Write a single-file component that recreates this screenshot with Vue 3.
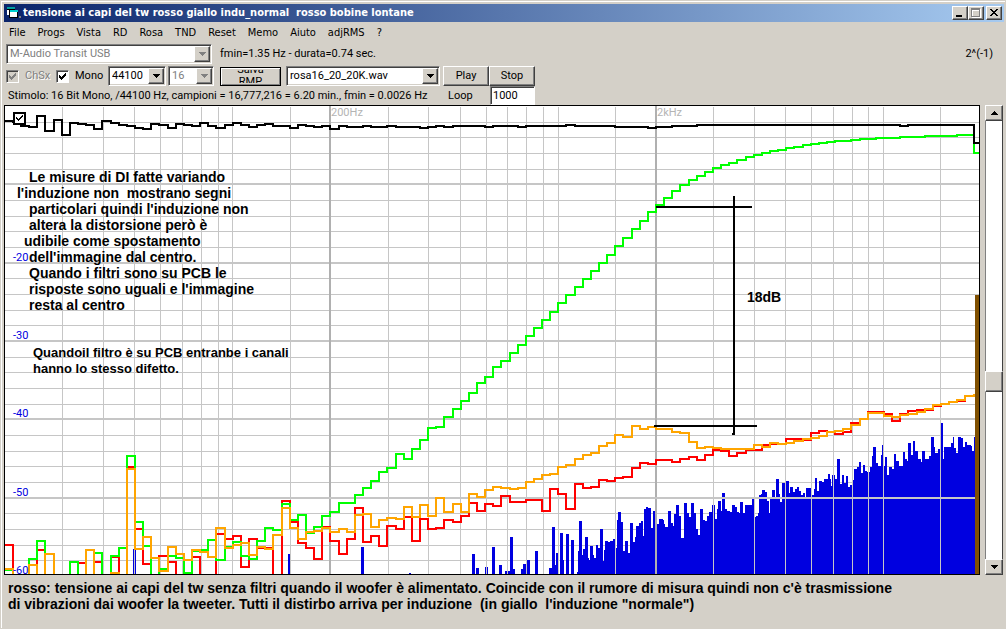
<script setup>
import { ref } from 'vue'

const menu = ['File', 'Progs', 'Vista', 'RD', 'Rosa', 'TND', 'Reset', 'Memo', 'Aiuto', 'adjRMS', '?']

const device = ref('M-Audio Transit USB')
const rate = ref('44100')
const bits = ref('16')
const wave = ref('rosa16_20_20K.wav')
const loops = ref('1000')
const left = ref(true)
const mono = ref(true)
const showTrace = ref(true)
const scrollPos = 57

// Drawing area of the graph, in graph units
const plot = { x: 5, y: 106, w: 974, h: 468 }
const bottom = plot.y + plot.h
const viewBox = `${plot.x} ${plot.y} ${plot.w} ${plot.h}`

const rows = [122, 137, 153, 169, 200, 216, 231, 247, 278, 294, 310, 325, 357, 372, 388, 404, 435, 451, 466, 482, 513, 529, 545, 560]
const majorRows = [184, 263, 341, 419]
const columns = [62, 103, 134, 160, 182, 201, 218, 232, 290, 388, 428, 460, 486, 507, 526, 543, 558, 615, 713, 754, 785, 811, 833, 852, 868, 883, 940]
const majorColumns = [330, 656]

// One level per band; OFF is below the visible range
const OFF = 590
const input = [
  121, 122, 126, 127, 116, 131, 120, 135, 123, 124, 125, 129, 121, 123, 125, 126, 128, 129, 124, 125,
  128, 124, 125, 126, 123, 126, 128, 125, 123, 125, 127, 125, 124, 126, 126, 128, 125, 126, 127, 126,
  129, 126, 127, 127, 126, 127, 127, 126, 127, 127, 127, 128, 127, 126, 127, 126, 126, 126, 126, 127,
  126, 126, 126, 127, 126, 126, 126, 126, 126, 125, 126, 126, 126, 126, 126, 127, 127, 127, 127, 128,
  127, 127, 126, 126, 126, 125, 125, 125, 125, 125, 125, 125, 125, 125, 125, 125, 125, 125, 125, 125,
  125, 125, 125, 125, 125, 125, 125, 125, 125, 125, 126, 125, 125, 125, 125, 125, 125, 125, 125, 143
]
const green = [
  570, OFF, OFF, 559, 541, OFF, OFF, OFF, 562, OFF, OFF, 553, OFF, 556, 548, 456, 522, 546, OFF, 569,
  556, 558, 573, 551, 550, 540, 560, 547, 542, 556, 559, 541, 528, 530, 504, 520, 515, 533, 527, 516,
  512, 503, 503, 495, 488, 481, 472, 468, 454, 459, 449, 440, 428, 427, 417, 409, 401, 393, 383, 377,
  367, 361, 353, 345, 336, 328, 320, 312, 303, 295, 287, 279, 271, 263, 255, 246, 238, 229, 221, 212,
  205, 198, 191, 185, 180, 176, 172, 168, 165, 163, 160, 157, 155, 153, 151, 150, 148, 147, 145, 144,
  143, 142, 141, 141, 140, 139, 139, 138, 138, 138, 137, 137, 137, 136, 136, 136, 136, 135, 135, 153
]
const red = [
  545, OFF, OFF, OFF, 550, OFF, OFF, OFF, OFF, 563, OFF, 562, OFF, 557, OFF, 467, 529, 564, OFF, 556,
  562, OFF, OFF, 557, OFF, OFF, 534, 539, 536, 567, 539, 548, 548, OFF, 501, 522, 543, 548, 559, 527,
  541, 554, 539, 508, 542, 536, 546, 526, 529, 517, 541, 519, 529, 528, 520, 522, 516, 503, 511, 504,
  506, 496, 502, 502, 500, 500, 511, 489, 494, 509, 484, 488, 487, 480, 481, 478, 477, 468, 463, 464,
  460, 460, 462, 459, 457, 460, 455, 450, 451, 456, 453, 450, 450, 445, 444, 444, 439, 439, 440, 433,
  431, 432, 434, 432, 423, 419, 412, 412, 414, 421, 414, 411, 410, 410, 406, 404, 402, 401, 396, 396
]
const orange = [
  569, OFF, OFF, 565, OFF, 554, OFF, OFF, OFF, OFF, 550, OFF, OFF, 573, OFF, 469, 549, 537, 558, 571,
  547, 554, 560, 550, 552, 557, 528, 548, 545, 543, 555, 547, 549, 535, 508, 528, 539, 532, 531, 528,
  532, 529, 532, 515, 514, 527, 520, 518, 519, 507, 517, 505, 516, 498, 512, 504, 512, 494, 497, 490,
  487, 488, 489, 488, 482, 479, 475, 474, 467, 465, 459, 455, 453, 446, 443, 435, 437, 426, 429, 427,
  429, 429, 432, 433, 442, 448, 447, 448, 449, 449, 449, 449, 445, 447, 443, 444, 443, 441, 439, 438,
  436, 432, 431, 429, 425, 419, 413, 413, 416, 417, 415, 414, 412, 409, 405, 404, 402, 400, 396, 395
]

const bandX = (k) => Math.round(4.7 + k * 8.142)

function stairs(levels) {
  let d = `M${bandX(0)} ${levels[0]}`
  levels.forEach((y, k) => {
    d += `V${y}H${k === levels.length - 1 ? plot.x + plot.w : bandX(k + 1)}`
  })
  return d
}

const traces = [
  { name: 'red', d: stairs(red) },
  { name: 'green', d: stairs(green) },
  { name: 'orange', d: stairs(orange) },
  { name: 'black', d: stairs(input) }
]

// Isolated spectrum lines: x, width, top
const spikes = [
  [133, 1, 549], [135, 1, 549], [288, 2, 554], [361, 3, 547], [409, 2, 573], [472, 3, 554], [476, 3, 568],
  [485, 1, 567], [487, 1, 567], [492, 3, 547], [499, 3, 565], [505, 5, 571], [510, 3, 537], [513, 2, 569],
  [521, 2, 569], [523, 3, 564], [527, 3, 560], [535, 3, 551], [549, 3, 568], [552, 3, 527], [555, 1, 565],
  [556, 2, 553], [560, 3, 533], [563, 1, 560], [566, 3, 534], [571, 3, 540], [577, 1, 572]
]

// Dense part of the spectrum: bin, level, in thirds of a graph unit from (470, 410)
const bins = [
  324, 423, 328, 334, 335, 434, 340, 418, 346, 380, 353, 445, 358, 450, 361, 409, 368, 436, 373, 443, 378, 405, 385, 414,
  391, 358, 398, 453, 403, 420, 406, 394, 413, 397, 420, 392, 428, 388, 435, 414, 440, 330, 445, 305, 452, 337, 458, 422,
  466, 392, 473, 430, 479, 441, 481, 338, 488, 396, 494, 380, 499, 347, 508, 338, 514, 332, 520, 377, 523, 296, 528, 290,
  535, 294, 542, 354, 550, 302, 555, 340, 562, 342, 568, 326, 578, 330, 582, 342, 586, 350, 595, 302, 602, 340, 608, 348,
  613, 312, 619, 284, 626, 318, 633, 384, 641, 278, 650, 308, 658, 320, 664, 278, 671, 310, 677, 358, 684, 375, 690, 296,
  698, 330, 706, 332, 711, 318, 718, 306, 726, 286, 735, 328, 741, 296, 745, 272, 752, 303, 757, 248, 764, 298, 772, 302,
  780, 306, 787, 284, 794, 290, 800, 306, 808, 310, 811, 275, 818, 308, 826, 284, 838, 284, 846, 268, 852, 320, 858, 318,
  864, 310, 867, 255, 874, 252, 877, 240, 884, 246, 892, 274, 897, 310, 901, 262, 907, 240, 914, 262, 919, 206, 926, 252,
  931, 275, 937, 220, 944, 238, 949, 212, 956, 248, 961, 230, 969, 246, 975, 236, 980, 230, 986, 242, 992, 256, 998, 250,
  1005, 262, 1009, 233, 1024, 254, 1031, 236, 1034, 203, 1041, 242, 1048, 212, 1056, 216, 1062, 208, 1069, 206, 1073, 193,
  1080, 208, 1084, 228, 1087, 196, 1094, 206, 1101, 148, 1110, 222, 1115, 194, 1122, 218, 1127, 198, 1134, 230, 1141, 226,
  1147, 210, 1153, 176, 1162, 170, 1166, 157, 1173, 188, 1178, 166, 1184, 184, 1192, 186, 1199, 172, 1207, 138, 1210, 110,
  1217, 158, 1224, 168, 1232, 136, 1235, 104, 1240, 168, 1244, 142, 1250, 194, 1258, 170, 1266, 178, 1271, 131, 1277, 154,
  1286, 168, 1295, 168, 1298, 125, 1305, 146, 1312, 154, 1315, 100, 1322, 134, 1328, 92, 1334, 124, 1343, 146, 1352, 155,
  1357, 122, 1366, 146, 1376, 138, 1384, 80, 1391, 112, 1396, 130, 1404, 118, 1411, 115, 1414, 40, 1419, 146, 1423, 110,
  1434, 112, 1444, 98, 1448, 82, 1453, 114, 1458, 130, 1463, 80, 1472, 84, 1478, 110, 1484, 97, 1492, 104, 1502, 108,
  1507, 122, 1511, 80
]
let spectrum = `M578 ${bottom}`
for (let i = 0; i < bins.length; i += 2) {
  spectrum += `H${Math.round(470 + bins[i] / 3)}V${Math.round(410 + bins[i + 1] / 3)}`
}
spectrum += `H975V${bottom}Z`

// Text on the graph: left edge, vertical centre, kind
const notes = [
  [331, 113, 'freq', '200Hz'],
  [657, 113, 'freq', '2kHz'],
  [13, 258, 'level', '-20'],
  [13, 336, 'level', '-30'],
  [13, 414, 'level', '-40'],
  [13, 493, 'level', '-50'],
  [13, 571, 'level', '-60'],
  [29, 177, 'note', 'Le misure di DI fatte variando'],
  [17, 193, 'note', "l'induzione non  mostrano segni"],
  [29, 209, 'note', "particolari quindi l'induzione non"],
  [29, 225, 'note', 'altera la distorsione però è'],
  [24, 241, 'note', 'udibile come spostamento'],
  [29, 257, 'note', "dell'immagine dal centro."],
  [29, 273, 'note', 'Quando i filtri sono su PCB le'],
  [29, 289, 'note', "risposte sono uguali e l'immagine"],
  [29, 305, 'note', 'resta al centro'],
  [33, 353, 'remark', 'Quandoil filtro è su PCB entranbe i canali'],
  [33, 369, 'remark', 'hanno lo stesso difetto.'],
  [747, 297, 'note', '18dB']
]
const place = (x, y) => ({
  left: `${((x - plot.x) / plot.w) * 100}%`,
  top: `${((y - plot.y) / plot.h) * 100}%`
})
</script>

<template>
  <main class="window">
    <header class="titlebar">
      <svg class="app-icon" viewBox="0 0 14 12" width="14" height="12" shape-rendering="crispEdges">
        <path d="M0 1H8V8H0Z" fill="#fff" />
        <path d="M0 0H8V2H0Z" fill="#00a0a0" />
        <path d="M3 4H11V11H3Z" fill="#fff" />
        <path d="M3 3H11V5H3Z" fill="#00d0d0" />
        <path d="M2 3H3V11H2ZM3 10H11V11H3ZM10 5H11V10H10ZM0 2H8V3H0Z" fill="#000" />
        <path d="M12 9H14V11H12Z" fill="#808080" />
      </svg>
      <h1>tensione ai capi del tw rosso giallo indu_normal&nbsp; rosso bobine lontane</h1>
      <div class="window-buttons">
        <button type="button" aria-label="Riduci">
          <svg viewBox="0 0 12 10" width="12" height="10" shape-rendering="crispEdges"><path d="M2 7H8V9H2Z" /></svg>
        </button>
        <button type="button" aria-label="Ingrandisci" disabled>
          <svg viewBox="0 0 12 10" width="12" height="10" shape-rendering="crispEdges">
            <path d="M2 1H11V10H2ZM3 3V9H10V3Z" fill="#fff" fill-rule="evenodd" />
            <path d="M1 0H10V9H1ZM2 2V8H9V2Z" fill="#808080" fill-rule="evenodd" />
          </svg>
        </button>
        <button type="button" class="close" aria-label="Chiudi">
          <svg viewBox="0 0 12 10" width="12" height="10" shape-rendering="crispEdges">
            <path d="M2 1H4V2H5V3H7V2H8V1H10V2H9V3H8V4H7V5H8V6H9V7H10V8H8V7H7V6H5V7H4V8H2V7H3V6H4V5H5V4H4V3H3V2H2Z" />
          </svg>
        </button>
      </div>
    </header>

    <nav class="menu">
      <button v-for="item in menu" :key="item" type="button">{{ item }}</button>
    </nav>

    <section class="bar">
      <span class="combo device off">
        <select v-model="device" aria-label="Periferica" disabled><option>M-Audio Transit USB</option></select>
        <i><svg viewBox="0 0 7 4" width="7" height="4" shape-rendering="crispEdges"><path d="M0 0H7V1H6V2H5V3H4V4H3V3H2V2H1V1H0Z" /></svg></i>
      </span>
      <output>fmin=1.35 Hz - durata=0.74 sec.</output>
      <output class="power">2^(-1)</output>
    </section>

    <section class="bar">
      <label class="option off">
        <span class="check"><input v-model="left" type="checkbox" disabled><svg viewBox="0 0 7 7" width="7" height="7" shape-rendering="crispEdges"><path d="M0 2H1V3H2V4H3V3H4V2H5V1H6V0H7V3H6V4H5V5H4V6H3V7H2V6H1V5H0Z" /></svg></span>
        ChSx
      </label>
      <label class="option">
        <span class="check"><input v-model="mono" type="checkbox"><svg viewBox="0 0 7 7" width="7" height="7" shape-rendering="crispEdges"><path d="M0 2H1V3H2V4H3V3H4V2H5V1H6V0H7V3H6V4H5V5H4V6H3V7H2V6H1V5H0Z" /></svg></span>
        Mono
      </label>
      <span class="combo rate">
        <select v-model="rate" aria-label="Frequenza di campionamento"><option>44100</option></select>
        <i><svg viewBox="0 0 7 4" width="7" height="4" shape-rendering="crispEdges"><path d="M0 0H7V1H6V2H5V3H4V4H3V3H2V2H1V1H0Z" /></svg></i>
      </span>
      <span class="combo bits off">
        <select v-model="bits" aria-label="Bit" disabled><option>16</option></select>
        <i><svg viewBox="0 0 7 4" width="7" height="4" shape-rendering="crispEdges"><path d="M0 0H7V1H6V2H5V3H4V4H3V3H2V2H1V1H0Z" /></svg></i>
      </span>
      <button type="button" class="push save"><span>Salva<br>RMP</span></button>
      <span class="combo wave">
        <select v-model="wave" aria-label="File"><option>rosa16_20_20K.wav</option></select>
        <i><svg viewBox="0 0 7 4" width="7" height="4" shape-rendering="crispEdges"><path d="M0 0H7V1H6V2H5V3H4V4H3V3H2V2H1V1H0Z" /></svg></i>
      </span>
      <button type="button" class="push">Play</button>
      <button type="button" class="push">Stop</button>
    </section>

    <section class="bar status">
      <output class="stimulus">Stimolo: 16 Bit Mono, /44100 Hz, campioni = 16,777,216 = 6.20 min., fmin = 0.0026 Hz</output>
      <label for="loops">Loop</label>
      <input id="loops" v-model="loops" type="text">
    </section>

    <section class="work">
      <div class="graph">
        <svg class="traces" :viewBox="viewBox" preserveAspectRatio="none" shape-rendering="crispEdges">
          <g class="grid">
            <path v-for="y in rows" :key="y" :d="`M5 ${y + 0.5}H979`" />
            <path v-for="y in majorRows" :key="y" class="major" :d="`M5 ${y}H979`" />
          </g>
          <g class="spectrum">
            <rect v-for="s in spikes" :key="s[0]" :x="s[0]" :y="s[2]" :width="s[1]" :height="bottom - s[2]" />
            <path :d="spectrum" />
          </g>
          <g class="grid">
            <path v-for="x in columns" :key="x" :d="`M${x + 0.5} 107V574`" />
            <path v-for="x in majorColumns" :key="x" class="decade" :d="`M${x} 106V574`" />
            <path class="major" d="M5 498H979" />
          </g>
          <path v-for="t in traces" :key="t.name" class="trace" :class="t.name" :d="t.d" />
          <rect class="meter" x="975" y="295" width="4" height="279" />
          <path class="trace black" d="M656 207H752M734 196V435M732 434H734M654 426H757" />
        </svg>
        <span v-for="n in notes" :key="n[3]" class="text" :class="n[2]" :style="place(n[0], n[1])">{{ n[3] }}</span>
        <label class="check trace-check"><input v-model="showTrace" type="checkbox" aria-label="Mostra traccia"><svg viewBox="0 0 7 7" width="7" height="7" shape-rendering="crispEdges"><path d="M0 2H1V3H2V4H3V3H4V2H5V1H6V0H7V2H6V3H5V4H4V5H3V6H2V5H1V4H0Z" /></svg></label>
      </div>
      <div class="scroll">
        <button type="button" aria-label="Su"><svg viewBox="0 0 7 4" width="7" height="4" shape-rendering="crispEdges"><path d="M3 0H4V1H5V2H6V3H7V4H0V3H1V2H2V1H3Z" /></svg></button>
        <div class="track"><div class="thumb" :style="{ top: scrollPos + '%' }"></div></div>
        <button type="button" aria-label="Giù"><svg viewBox="0 0 7 4" width="7" height="4" shape-rendering="crispEdges"><path d="M0 0H7V1H6V2H5V3H4V4H3V3H2V2H1V1H0Z" /></svg></button>
      </div>
    </section>

    <footer>
      <p>rosso: tensione ai capi del tw senza filtri quando il woofer è alimentato. Coincide con il rumore di misura quindi non c'è trasmissione<br>di vibrazioni dai woofer la tweeter. Tutti il distirbo arriva per induzione&nbsp; (in giallo&nbsp; l'induzione "normale")</p>
    </footer>
  </main>
</template>

<style>
body {
  margin: 0;
  background: #fff;
}
</style>

<style scoped>
.window {
  box-sizing: border-box;
  display: flex;
  flex-direction: column;
  min-height: calc(100vh - 1px);
  margin-right: 2px;
  padding: 2px 2px 0;
  border-top: 1px solid #fff;
  border-left: 1px solid #fff;
  border-bottom: 1px solid #808080;
  outline: 1px solid #d4d0c8;
  outline-offset: -1px;
  background: #d4d0c8;
  box-shadow: inset 1px 1px #fff;
  color: #000;
  font: 11px/14px Roboto, "Liberation Sans", Arial, sans-serif;
}
button, input, select {
  box-sizing: border-box;
  margin: 0;
  padding: 0;
  border: 0;
  border-radius: 0;
  background: none;
  color: inherit;
  font: inherit;
  appearance: none;
}
.titlebar {
  display: flex;
  align-items: center;
  height: 18px;
  margin: 1px 0 0 1px;
  padding: 0 2px 0 3px;
  background: linear-gradient(to right, #0a246a, #a6caf0);
}
.app-icon {
  flex: none;
}
.titlebar h1 {
  flex: 1;
  margin: 0 0 0 2px;
  color: #fff;
  font: bold 11px/18px "DejaVu Sans Condensed", "DejaVu Sans", sans-serif;
  white-space: nowrap;
}
.window-buttons {
  display: flex;
}
.window-buttons button,
.scroll button,
.combo i,
.push,
.thumb {
  display: flex;
  align-items: center;
  justify-content: center;
  border: 1px solid;
  border-color: #fff #404040 #404040 #fff;
  box-shadow: inset -1px -1px #808080;
  background: #d4d0c8;
}
.window-buttons button {
  width: 16px;
  height: 14px;
}
.window-buttons .close {
  margin-left: 2px;
}
.menu {
  display: flex;
  gap: 12px;
  height: 22px;
  padding: 0 6px;
  font: 11px/20px "DejaVu Sans Condensed", "DejaVu Sans", sans-serif;
}
.bar {
  display: flex;
  align-items: center;
  height: 20px;
  margin-bottom: 2px;
  padding-left: 3px;
  white-space: nowrap;
}
.bar + .bar {
  margin-bottom: 0;
}
.combo {
  box-sizing: border-box;
  display: flex;
  height: 20px;
  border: 1px solid;
  border-color: #808080 #fff #fff #808080;
  background: #fff;
  box-shadow: inset 1px 1px #404040, inset -1px -1px #d4d0c8;
}
.combo select {
  flex: 1;
  min-width: 0;
  padding-left: 3px;
  opacity: 1;
}
.combo i {
  box-sizing: border-box;
  width: 16px;
  margin: 1px;
}
.off {
  color: #808080;
}
.off svg {
  fill: #808080;
}
.device {
  width: 206px;
  margin-right: 8px;
}
.power {
  margin-left: auto;
  padding-right: 11px;
}
.option {
  display: flex;
  align-items: center;
  gap: 6px;
  width: 52px;
}
.option.off {
  width: 50px;
  text-shadow: 1px 1px #fff;
}
.check {
  display: grid;
  place-items: center;
}
.check > * {
  grid-area: 1 / 1;
}
.check svg {
  pointer-events: none;
}
.check input {
  width: 13px;
  height: 13px;
  border: 1px solid;
  border-color: #808080 #fff #fff #808080;
  box-shadow: inset 1px 1px #404040;
  background: #fff;
}
.off .check input {
  background: #d4d0c8;
}
.rate {
  width: 58px;
  margin-right: 2px;
}
.bits {
  width: 46px;
  margin-right: 6px;
}
.wave {
  width: 154px;
  margin: 0 3px 0 5px;
}
.push {
  width: 46px;
  height: 20px;
}
.save {
  width: 61px;
  height: 19px;
  border: 1px solid #000;
  box-shadow: inset 1px 1px #fff, inset -1px -1px #808080;
  overflow: hidden;
}
.save span {
  height: 13px;
  margin: 1px 0;
  display: flex;
  align-items: center;
  overflow: hidden;
  line-height: 12px;
}
.status {
  height: 19px;
  padding-left: 5px;
}
.stimulus {
  width: 440px;
}
.status label {
  width: 42px;
}
.status input {
  width: 45px;
  height: 19px;
  padding-left: 2px;
  border: 1px solid;
  border-color: #808080 #fff #fff #808080;
  box-shadow: inset 1px 1px #404040;
  background: #fff;
}
.work {
  display: flex;
  flex: 1;
  gap: 5px;
  margin: 0 1px;
}
.graph {
  position: relative;
  flex: 1;
  border: 1px solid #000;
  background: #fff;
  overflow: hidden;
}
.traces {
  position: absolute;
  width: 100%;
  height: 100%;
}
.grid path {
  fill: none;
  stroke: #c6c6c6;
  stroke-width: 1;
}
.grid .major {
  stroke-width: 2;
}
.grid .decade {
  stroke: #b0b0b0;
  stroke-width: 2;
}
.spectrum {
  fill: #0000e0;
}
.trace {
  fill: none;
  stroke-width: 2;
}
.red { stroke: #f00; }
.green { stroke: #0f0; }
.orange { stroke: #ffa500; }
.black { stroke: #000; }
.meter {
  fill: #805000;
}
.text {
  position: absolute;
  height: 16px;
  margin-top: -8px;
  line-height: 16px;
  white-space: pre;
}
.freq {
  color: #b4b4b4;
}
.level {
  color: #0000e0;
}
.note, .remark, footer p {
  font-family: "Liberation Sans", Arial, sans-serif;
  font-size: 14px;
  font-weight: bold;
}
.remark {
  font-size: 13px;
}
.trace-check {
  position: absolute;
  left: 8px;
  top: 6px;
}
.trace-check input {
  border: 2px solid #000;
  box-shadow: none;
}
.scroll {
  display: flex;
  flex-direction: column;
  width: 18px;
}
.scroll button {
  height: 16px;
}
.track {
  position: relative;
  flex: 1;
  border-left: 1px solid #808080;
  border-right: 1px solid #404040;
  background: #fff;
}
.thumb {
  position: absolute;
  left: -1px;
  right: -1px;
  height: 19px;
}
footer {
  padding: 5px 5px 16px;
}
footer p {
  margin: 0;
  line-height: 16px;
  white-space: nowrap;
}
</style>
